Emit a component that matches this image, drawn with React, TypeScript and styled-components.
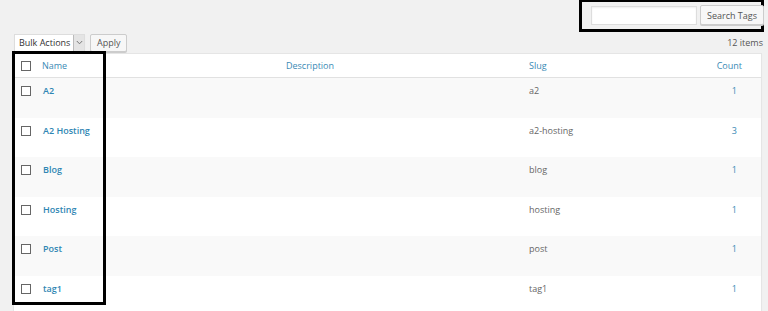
import styled, { createGlobalStyle } from "styled-components";

const GlobalStyle = createGlobalStyle`
	html, body {
		margin: 0;
		padding: 0;
		overflow: hidden;
		background: #f1f1f1;
	}
	body {
		font-family: "Open Sans", "Noto Sans", sans-serif;
		font-size: 9px;
		color: #444;
	}
`;

const Page = styled.div`
	padding: 0 6px 0 13px;
	height: 311px;
`;

const SearchRow = styled.div`
	display: flex;
	justify-content: flex-end;
	height: 32px;
	margin-right: -2px;
`;

const SearchBox = styled.form`
	display: flex;
	align-items: flex-start;
	gap: 3px;
	box-sizing: border-box;
	width: 185px;
	height: 32px;
	border: 3px solid #000;
	border-top-width: 2px;
	padding: 3px 1px 0 9px;
	margin: 0;
`;

const SearchInput = styled.input`
	box-sizing: border-box;
	width: 106px;
	height: 19px;
	margin-top: 1px;
	border: 1px solid #ddd;
	background: #fff;
	box-shadow: inset 0 1px 2px rgba(0, 0, 0, 0.07);
	padding: 0 4px;
	font: inherit;
	outline: none;
`;

const Button = styled.button<{ $h?: number }>`
	box-sizing: border-box;
	height: ${(p) => p.$h ?? 20}px;
	padding: 0 6px;
	border: 1px solid #ccc;
	border-radius: 2px;
	background: #f7f7f7;
	box-shadow: 0 1px 0 #ccc;
	color: #555;
	font-family: inherit;
	font-size: 9px;
	white-space: nowrap;
	cursor: pointer;
`;

const TableNav = styled.div`
	display: flex;
	align-items: center;
	justify-content: space-between;
	height: 21px;
`;

const Actions = styled.div`
	display: flex;
	align-items: center;
	gap: 5px;
	padding-left: 1px;
`;

const FakeSelect = styled.div`
	display: flex;
	align-items: stretch;
	box-sizing: border-box;
	width: 71px;
	height: 18px;
	border: 1px solid #ddd;
	background: #fff;
	box-shadow: 0 1px 1px rgba(0, 0, 0, 0.04);
`;

const SelectLabel = styled.span`
	flex: 1;
	display: flex;
	align-items: center;
	padding-left: 4px;
	color: #333;
	font-size: 9px;
`;

const SelectArrow = styled.span`
	width: 10px;
	display: flex;
	align-items: center;
	justify-content: center;
	background: #e4e4e4;
	border-left: 1px solid #bbb;
`;

const ItemCount = styled.span`
	color: #555;
	font-size: 9px;
	margin-right: -1px;
`;

const Table = styled.div`
	position: relative;
	border: 1px solid #e5e5e5;
	background: #fff;
	box-shadow: 0 1px 1px rgba(0, 0, 0, 0.04);
`;

const Row = styled.div<{ $head?: boolean; $alt?: boolean }>`
	display: grid;
	grid-template-columns: 28px 244px 243px 1fr 80px;
	align-items: ${(p) => (p.$head ? "center" : "start")};
	height: ${(p) => (p.$head ? "24px" : "39.5px")};
	background: ${(p) => (p.$alt ? "#f9f9f9" : "#fff")};
	border-bottom: ${(p) => (p.$head ? "1px solid #e1e1e1" : "none")};
	box-sizing: border-box;
	padding-top: ${(p) => (p.$head ? "0" : "7px")};
`;

const CheckCell = styled.div`
	display: flex;
	padding-left: 7px;
`;

const Check = styled.span<{ $top?: number }>`
	display: block;
	box-sizing: border-box;
	width: 10px;
	height: 10px;
	border: 1px solid #666;
	background: #fff;
	margin-top: ${(p) => p.$top ?? 0}px;
`;

const HeadLink = styled.a`
	color: #3a8ab5;
	text-decoration: none;
	font-size: 9px;
`;

const NameLink = styled.a`
	color: #2f86b3;
	font-weight: 600;
	text-decoration: none;
	font-size: 9px;
	line-height: 12px;
	padding-left: 1px;
`;

const Cell = styled.div`
	color: #666;
	font-size: 9px;
	line-height: 12px;
`;

const CountCell = styled.div<{ $head?: boolean }>`
	text-align: right;
	padding-right: ${(p) => (p.$head ? "19px" : "24px")};
	line-height: 12px;
`;

const CountLink = styled.a`
	color: #3a8ab5;
	text-decoration: none;
	font-size: 9px;
`;

// black annotation frame drawn over the first two columns
const Highlight = styled.div`
	position: absolute;
	left: -2px;
	top: -3px;
	width: 94px;
	height: 254px;
	box-sizing: border-box;
	border: 3px solid #000;
	pointer-events: none;
`;

const tags = [
	{ name: "A2", slug: "a2", count: 1 },
	{ name: "A2 Hosting", slug: "a2-hosting", count: 3 },
	{ name: "Blog", slug: "blog", count: 1 },
	{ name: "Hosting", slug: "hosting", count: 1 },
	{ name: "Post", slug: "post", count: 1 },
	{ name: "tag1", slug: "tag1", count: 1 },
];

function App() {
	return (
		<>
			<GlobalStyle />
			<Page>
				<SearchRow>
					<SearchBox onSubmit={(e) => e.preventDefault()}>
						<SearchInput type="search" />
						<Button $h={20}>Search Tags</Button>
					</SearchBox>
				</SearchRow>
				<TableNav>
					<Actions>
						<FakeSelect>
							<SelectLabel>Bulk Actions</SelectLabel>
							<SelectArrow>
								<svg width="7" height="5" viewBox="0 0 7 5">
									<path d="M0.8 1 L3.5 3.8 L6.2 1" fill="none" stroke="#777" strokeWidth="1" />
								</svg>
							</SelectArrow>
						</FakeSelect>
						<Button $h={18}>Apply</Button>
					</Actions>
					<ItemCount>12 items</ItemCount>
				</TableNav>
				<Table>
					<Row $head>
						<CheckCell>
							<Check />
						</CheckCell>
						<HeadLink href="#">Name</HeadLink>
						<HeadLink href="#">Description</HeadLink>
						<HeadLink href="#">Slug</HeadLink>
						<CountCell $head>
							<HeadLink href="#">Count</HeadLink>
						</CountCell>
					</Row>
					{tags.map((tag, i) => (
						<Row key={tag.slug} $alt={i % 2 === 0}>
							<CheckCell>
								<Check $top={1} />
							</CheckCell>
							<NameLink href="#">{tag.name}</NameLink>
							<Cell />
							<Cell>{tag.slug}</Cell>
							<CountCell>
								<CountLink href="#">{tag.count}</CountLink>
							</CountCell>
						</Row>
					))}
					<Highlight />
				</Table>
			</Page>
		</>
	);
}

export default App;
